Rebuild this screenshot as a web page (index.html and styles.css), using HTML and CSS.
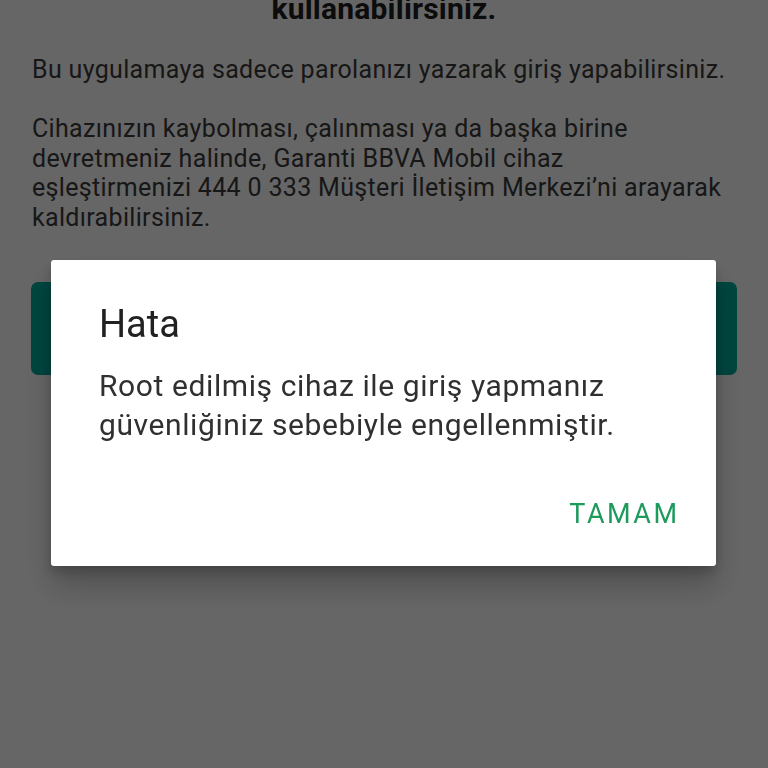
FILE: index.html
```html
<!DOCTYPE html>
<html lang="tr">
<head>
<meta charset="utf-8">
<link rel="stylesheet" href="styles.css">
</head>
<body>
<div class="screen">
  <h1 class="heading">kullanabilirsiniz.</h1>
  <p class="para p1">Bu uygulamaya sadece parolanızı yazarak giriş yapabilirsiniz.</p>
  <p class="para p2">Cihazınızın kaybolması, çalınması ya da başka birine<br>devretmeniz halinde, Garanti BBVA Mobil cihaz<br>eşleştirmenizi 444 0 333 Müşteri İletişim Merkezi’ni arayarak<br>kaldırabilirsiniz.</p>
  <div class="button-bar"></div>
</div>
<div class="overlay"></div>
<div class="dialog">
  <div class="dialog-title">Hata</div>
  <div class="dialog-msg">Root edilmiş cihaz ile giriş yapmanız<br>güvenliğiniz sebebiyle engellenmiştir.</div>
  <div class="dialog-actions"><span class="btn-ok">TAMAM</span></div>
</div>
</body>
</html>
```
FILE: styles.css
```css
html, body {
  margin: 0;
  padding: 0;
  width: 768px;
  height: 768px;
  overflow: hidden;
  background: #ffffff;
  font-family: Roboto, "Noto Sans", sans-serif;
}
.screen {
  padding: 0 32px;
}
.heading {
  margin: -9px 0 0;
  font-size: 30px;
  font-weight: 700;
  line-height: 36px;
  letter-spacing: 0.2px;
  text-align: center;
  color: #202020;
  white-space: nowrap;
}
.para {
  margin: 0;
  font-size: 25px;
  line-height: 29.5px;
  letter-spacing: 0.33px;
  color: #3a3a3a;
  white-space: nowrap;
}
.p1 { margin-top: 28px; }
.p2 { margin-top: 29.5px; }
.button-bar {
  margin: 50px -1px 0;
  height: 93px;
  border-radius: 7px;
  background: #00ae9e;
}
.overlay {
  position: fixed;
  inset: 0;
  background: rgba(0,0,0,0.6);
}
.dialog {
  position: fixed;
  left: 51px;
  top: 260px;
  width: 665px;
  height: 306px;
  box-sizing: border-box;
  background: #fff;
  border-radius: 3px;
  box-shadow: 0 20px 30px rgba(0,0,0,0.22), 0 6px 12px rgba(0,0,0,0.18);
  padding: 42px 39px 0 48px;
}
.dialog-title {
  font-size: 38px;
  line-height: 44px;
  color: #212121;
}
.dialog-msg {
  margin-top: 20px;
  font-size: 30px;
  line-height: 39px;
  letter-spacing: 0.6px;
  color: #303030;
  white-space: nowrap;
}
.dialog-actions {
  display: flex;
  justify-content: flex-end;
  margin-top: 54px;
}
.btn-ok {
  font-size: 27px;
  line-height: 32px;
  letter-spacing: 2.5px;
  margin-right: -2.5px;
  color: #1d9a5c;
}
```
